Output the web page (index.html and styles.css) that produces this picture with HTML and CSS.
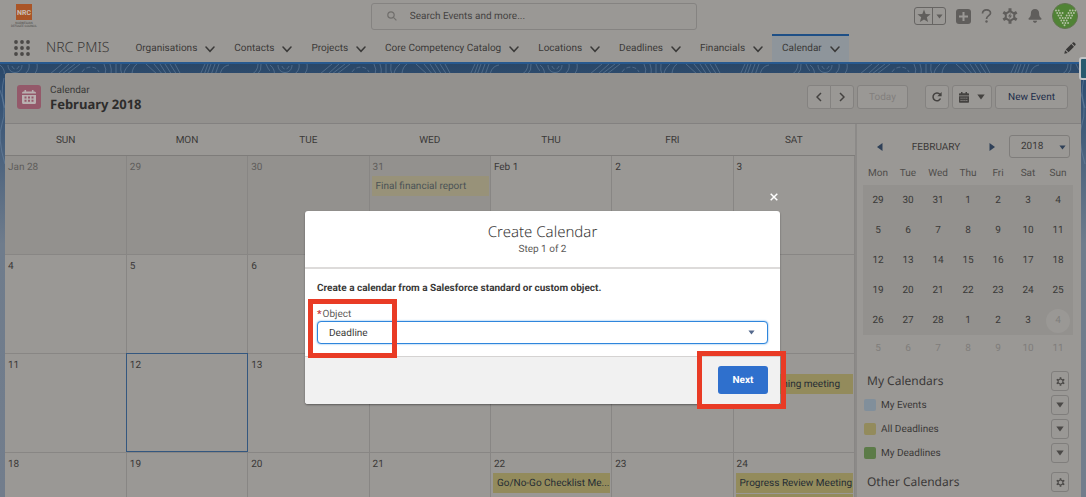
FILE: index.html
```html
<!DOCTYPE html>
<html lang="en">
<head>
<meta charset="utf-8">
<title>Calendar | NRC PMIS</title>
<link rel="stylesheet" href="styles.css">
</head>
<body>
<svg class="sprite" aria-hidden="true">
  <symbol id="chev" viewBox="0 0 10 7"><path d="M1 1l4 4.3L9 1" fill="none" stroke="currentColor" stroke-width="1.5" stroke-linecap="round"/></symbol>
  <symbol id="down" viewBox="0 0 8 6"><path d="M.3.5h7.4L4 5.5z" fill="currentColor"/></symbol>
  <symbol id="gear" viewBox="0 0 16 16"><path fill="none" stroke="currentColor" stroke-width="2" d="M8 3.2l4.2 2.4v4.8L8 12.8l-4.2-2.4V5.6z"/><path stroke="currentColor" stroke-width="3" d="M8 .3v3M8 12.7v3M1.3 4.2l2.6 1.5M12.1 10.3l2.6 1.5M14.7 4.2l-2.6 1.5M3.9 10.3l-2.6 1.5"/></symbol>
</svg>

<header class="topbar">
  <div class="logo">
    <svg class="logo-mark" viewBox="0 0 16 16" aria-hidden="true"><path fill="#aa5527" d="M0 0h16v16H0z"/></svg>
    <span class="logo-name">NRC</span>
    <span class="logo-sub">NORWEGIAN<br>REFUGEE COUNCIL</span>
  </div>
  <label class="search">
    <svg viewBox="0 0 10 10" aria-hidden="true"><circle cx="4" cy="4" r="3.2"/><path d="M6.4 6.4l3 3"/></svg>
    <input type="text" placeholder="Search Events and more..." aria-label="Search Events and more">
  </label>
  <div class="tools">
    <div class="fav">
      <button aria-label="Favorite"><svg width="14" height="14" viewBox="0 0 14 14"><path fill="currentColor" d="M7 .6l1.7 4.5 4.9.2-3.8 3 1.3 4.8L7 10.4l-4.1 2.7 1.3-4.8-3.8-3 4.9-.2z"/></svg></button>
      <button aria-label="Favorites list"><svg width="7" height="5"><use href="#down"/></svg></button>
    </div>
    <button aria-label="Add"><svg width="15" height="15" viewBox="0 0 15 15"><rect width="15" height="15" rx="3" fill="currentColor"/><path d="M7.5 3v9M3 7.5h9" stroke="#9a9895" stroke-width="2"/></svg></button>
    <button aria-label="Help"><svg width="11" height="14" viewBox="0 0 11 14"><path d="M1.5 4.5C1.4-.4 9.6-.3 9.5 4.2 9.4 6.700 5.500 6.800 5.500 10" fill="none" stroke="currentColor" stroke-width="1.700"/><circle cx="5.500" cy="12.500" r="1.200" fill="currentColor"/></svg></button>
    <button aria-label="Setup"><svg width="16" height="16" viewBox="0 0 16 16"><use href="#gear"/><path d="M8.800 4.800L6 8.500h1.700l-.5 2.700L10 7.500H8.300z" fill="currentColor"/></svg></button>
    <button aria-label="Notifications"><svg width="14" height="14" viewBox="0 0 14 14"><path fill="currentColor" d="M7 0c2.600 0 4.100 1.900 4.100 4.300 0 3 .7 3.600 2 4.800.9.8.3 1.600-.5 1.600H1.400C.6 10.700 0 9.900.9 9.100c1.300-1.200 2-1.800 2-4.800C2.900 1.900 4.400 0 7 0zM5 11.700h4c-.1 2.800-3.900 2.800-4 0z"/></svg></button>
    <button aria-label="Profile"><svg width="26" height="26" viewBox="0 0 26 26"><circle cx="13" cy="13" r="12.500" fill="#508335" stroke="#61744f"/><g fill="none" stroke="#b4c1a5" stroke-width="1.900" stroke-linecap="round"><path stroke-dasharray="0 2.700" d="M4 7.500h3M18 7.500h6M5.200 10h6M16.500 10h6M6.500 12.500h4M14.700 12.500h6M8 15h11M9.300 17.500h8M10.700 20h6M12.500 22.300h1"/></g></svg></button>
  </div>
</header>

<nav class="nav">
  <button class="launcher" aria-label="App launcher"><svg width="16" height="16" viewBox="0 0 16 16" fill="currentColor"><circle cx="2" cy="2" r="1.900"/><circle cx="8" cy="2" r="1.900"/><circle cx="14" cy="2" r="1.900"/><circle cx="2" cy="8" r="1.900"/><circle cx="8" cy="8" r="1.900"/><circle cx="14" cy="8" r="1.900"/><circle cx="2" cy="14" r="1.900"/><circle cx="8" cy="14" r="1.900"/><circle cx="14" cy="14" r="1.900"/></svg></button>
  <span class="app">NRC PMIS</span>
  <a class="tab" href="#">Organisations<svg><use href="#chev"/></svg></a>
  <a class="tab" href="#">Contacts<svg><use href="#chev"/></svg></a>
  <a class="tab" href="#">Projects<svg><use href="#chev"/></svg></a>
  <a class="tab" href="#">Core Competency Catalog<svg><use href="#chev"/></svg></a>
  <a class="tab" href="#">Locations<svg><use href="#chev"/></svg></a>
  <a class="tab" href="#">Deadlines<svg><use href="#chev"/></svg></a>
  <a class="tab" href="#">Financials<svg><use href="#chev"/></svg></a>
  <a class="tab active" href="#">Calendar<svg><use href="#chev"/></svg></a>
  <button class="edit" aria-label="Edit navigation"><svg width="12" height="12" viewBox="0 0 12 12" fill="currentColor"><path d="M.3 11.700l.8-3.400 2.600 2.600zM1.800 7.500l5.500-5.500 2.700 2.700-5.500 5.500zM8 1.300l.9-.9c.9-.9 3.500 1.700 2.600 2.600l-.9.900z"/></svg></button>
</nav>

<div class="stage">
  <svg class="topo" aria-hidden="true">
    <defs><pattern id="waves" width="270" height="130" patternUnits="userSpaceOnUse">
      <g fill="none" stroke="#6f8aa5" stroke-opacity=".5">
        <path d="M0 1c4 3 5 8 4 9M8 1c0 10 14 10 14 0M29 0c1 5-2 9-6 11M37 0c1 5-1 9-4 11M50 10L62 0M58 10L69 0M62 10L75 0M67 10L80 0M104 0q3 5 1 11M110 0q2 5 1 11M116 0v11M121 0q-1 6 1 11M130 0c-3 3-6 6-6 11M137 0c-4 3-5 7-5 11M146 0l12 11M154 0l9 11M160 0l7 11M165 0l7 11M170 0l7 11M175 0l6 11M200 11l5-11M204 11l4-11M207 11l4-11M211 11l4-11M215 11l4-11M220 11c1-6 4-9 9-10M251 11q7-4 7-11M257 11q5-5 4-11M266 0q2 5 4 7"/>
        <path d="M82 8c3-6 14-7 17 0M12 2c1 4 6 4 7 0" stroke-dasharray="4 2"/>
        <path d="M0 26q7 20 2 34t3 40M265 30q-8 16 0 26M269 40q-7 8 1 16M4 14q-4 16 1 30"/>
      </g>
    </pattern></defs>
    <rect width="100%" height="130" fill="url(#waves)"/>
  </svg>

  <main class="card">
    <div class="card-head">
      <svg class="cal-icon" viewBox="0 0 24 24" aria-hidden="true"><rect width="24" height="24" rx="3" fill="#94596a"/><g fill="#b9b0b0"><path d="M5 8.500V8q0-1.500 1.500-1.500h11Q19 6.500 19 8v.5zM5 10h14v7.500q0 1.500-1.500 1.500h-11Q5 19 5 17.500z"/><path d="M7.500 5h1.600v3H7.500zM14.900 5h1.600v3h-1.600z"/></g><path d="M7.500 12.500h9M7.500 15.800h9" stroke="#94596a" stroke-width="2" stroke-dasharray="2 1.500"/></svg>
      <div class="titles"><span>Calendar</span><h1>February 2018</h1></div>
      <div class="actions">
        <div class="pair">
          <button class="btn" aria-label="Previous"><svg width="6" height="10" viewBox="0 0 6 10"><path d="M5 1L1 5l4 4" class="line"/></svg></button>
          <button class="btn" aria-label="Next month"><svg width="6" height="10" viewBox="0 0 6 10"><path d="M1 1l4 4-4 4" class="line"/></svg></button>
        </div>
        <button class="btn today" disabled>Today</button>
        <button class="btn refresh" aria-label="Refresh"><svg width="10" height="10" viewBox="0 0 10 10"><path d="M8.500 6.500A3.900 3.900 0 1 1 8 2.500" class="line"/><path d="M9.600 0v4.300H5.400z" fill="currentColor"/></svg></button>
        <button class="btn view" aria-label="View"><svg width="10" height="11" viewBox="0 0 10 11"><path d="M0 3.500V2q0-.8.8-.8h8.400q.8 0 .8.8v1.500zM0 4.300h10v5.700q0 .8-.8.8H.8Q0 10.800 0 10zM2 0h1.500v2H2zM6.500 0H8v2H6.500z" fill="currentColor"/><path d="M1.500 6.200h7M1.500 8.500h7" stroke="#9a9895" stroke-width=".8" stroke-dasharray="1.200 .7"/></svg><svg width="8" height="6"><use href="#down"/></svg></button>
        <button class="btn new">New Event</button>
      </div>
    </div>

    <div class="card-body">
      <table class="month">
        <thead><tr><th>SUN</th><th>MON</th><th>TUE</th><th>WED</th><th>THU</th><th>FRI</th><th>SAT</th></tr></thead>
        <tbody>
          <tr><td class="past">Jan 28</td><td class="past">29</td><td class="past">30</td><td class="past">31<div class="event faded">Final financial report</div></td><td>Feb 1</td><td>2</td><td>3</td></tr>
          <tr><td>4</td><td>5</td><td>6</td><td>7</td><td>8</td><td>9</td><td>10</td></tr>
          <tr><td>11</td><td class="now">12</td><td>13</td><td>14</td><td>15</td><td>16</td><td>17<div class="event tail">ning meeting</div></td></tr>
          <tr><td>18</td><td>19</td><td>20</td><td>21</td><td>22<div class="event">Go/No-Go Checklist Me...</div></td><td>23</td><td>24<div class="event">Progress Review Meeting</div><div class="event"></div></td></tr>
        </tbody>
      </table>

      <aside class="side">
        <div class="picker">
          <button aria-label="Previous month"><svg width="6" height="8" viewBox="0 0 6 8"><path d="M5.500 0v8L0 4z" fill="currentColor"/></svg></button>
          <span>FEBRUARY</span>
          <button aria-label="Next month"><svg width="6" height="8" viewBox="0 0 6 8"><path d="M.5 0v8L6 4z" fill="currentColor"/></svg></button>
          <div class="year"><select aria-label="Year"><option>2018</option></select><svg width="7" height="5"><use href="#down"/></svg></div>
        </div>
        <table class="mini">
          <thead><tr><th>Mon</th><th>Tue</th><th>Wed</th><th>Thu</th><th>Fri</th><th>Sat</th><th>Sun</th></tr></thead>
          <tbody>
            <tr><td>29</td><td>30</td><td>31</td><td>1</td><td>2</td><td>3</td><td>4</td></tr>
            <tr><td>5</td><td>6</td><td>7</td><td>8</td><td>9</td><td>10</td><td>11</td></tr>
            <tr><td>12</td><td>13</td><td>14</td><td>15</td><td>16</td><td>17</td><td>18</td></tr>
            <tr><td>19</td><td>20</td><td>21</td><td>22</td><td>23</td><td>24</td><td>25</td></tr>
            <tr><td>26</td><td>27</td><td>28</td><td>1</td><td>2</td><td>3</td><td><span class="dot">4</span></td></tr>
          </tbody>
          <tfoot><tr><td>5</td><td>6</td><td>7</td><td>8</td><td>9</td><td>10</td><td>11</td></tr></tfoot>
        </table>
        <div class="group"><h2>My Calendars</h2><button class="sq" aria-label="My Calendars settings"><svg width="9" height="9"><use href="#gear"/></svg></button></div>
        <div class="cal"><i class="swatch blue"></i><span>My Events</span><button class="sq" aria-label="My Events menu"><svg width="8" height="6"><use href="#down"/></svg></button></div>
        <div class="cal"><i class="swatch yellow"></i><span>All Deadlines</span><button class="sq" aria-label="All Deadlines menu"><svg width="8" height="6"><use href="#down"/></svg></button></div>
        <div class="cal"><i class="swatch green"></i><span>My Deadlines</span><button class="sq" aria-label="My Deadlines menu"><svg width="8" height="6"><use href="#down"/></svg></button></div>
        <div class="group other"><h2>Other Calendars</h2><button class="sq" aria-label="Other Calendars settings"><svg width="9" height="9"><use href="#gear"/></svg></button></div>
      </aside>
    </div>
  </main>
</div>

<div class="handle"></div>

<div class="overlay">
  <section class="modal" role="dialog" aria-labelledby="dlg-title">
    <button class="close" aria-label="Close"><svg width="8" height="8" viewBox="0 0 8 8"><path d="M.7.700l6.600 6.600M7.300.7L.7 7.300" stroke="#fff" stroke-width="1.500"/></svg></button>
    <header class="modal-head"><h2 id="dlg-title">Create Calendar</h2><p>Step 1 of 2</p></header>
    <div class="modal-body">
      <p class="lead">Create a calendar from a Salesforce standard or custom object.</p>
      <label for="object"><b>*</b>Object</label>
      <div class="pick"><select id="object"><option>Deadline</option></select><svg width="7" height="5"><use href="#down"/></svg></div>
    </div>
    <footer class="modal-foot"><button class="next">Next</button></footer>
    <div class="mark mark-field"></div>
    <div class="mark mark-next"></div>
  </section>
</div>
</body>
</html>
```
FILE: styles.css
```css
* { box-sizing: border-box; }
body {
  margin: 0;
  height: 100vh;
  overflow: hidden;
  display: flex;
  flex-direction: column;
  position: relative;
  background: #9a9895;
  color: #3a3938;
  font: 10px/16px Roboto, "Noto Sans", sans-serif;
  text-rendering: geometricPrecision;
}
button, input, select { font: inherit; color: inherit; margin: 0; text-rendering: inherit; }
button { display: inline-flex; align-items: center; justify-content: center; padding: 0; border: 0; background: none; }
svg { display: block; }
h1, h2, p { margin: 0; font-weight: 400; }
h1, h2, .app { font-family: "Noto Sans", sans-serif; }
table { border-collapse: collapse; table-layout: fixed; }
a { color: inherit; text-decoration: none; }
.sprite { position: absolute; width: 0; height: 0; }
.line { fill: none; stroke: currentColor; stroke-width: 1.5; }

/* Top bar */
.topbar { flex: none; height: 34px; display: grid; grid-template-columns: 20fr 18fr 21fr; align-items: center; padding: 0 8px 2px; }
.logo { position: relative; width: 32px; display: flex; flex-direction: column; align-items: center; color: #4b4947; }
.logo-mark { width: 16px; height: 16px; }
.logo-name { position: absolute; top: 2px; color: #c9bfb8; font-size: 7px; line-height: 14px; font-weight: 700; }
.logo-sub { margin-top: 2px; font-size: 3px; line-height: 3px; text-align: center; white-space: nowrap; }
.search { display: flex; align-items: center; gap: 13px; height: 27px; padding-left: 15px; border: 1px solid #858381; border-radius: 3px; }
.search svg { width: 10px; height: 10px; fill: none; stroke: #706e6c; stroke-width: 1.2; }
.search input { flex: 1; min-width: 0; padding: 2px 0 0; border: 0; outline: 0; background: none; }
.search input::placeholder { color: #454342; opacity: 1; }
.tools { display: flex; justify-content: flex-end; align-items: center; gap: 10px; color: #605e5c; }
.fav { display: flex; height: 18px; border: 1px solid #676563; border-radius: 3px; }
.fav button { width: 17px; }
.fav button + button { width: 13px; border-left: 1px solid #676563; }

/* Navigation */
.nav { flex: none; height: 28px; display: flex; align-items: stretch; padding: 0 10px 0 14px; }
.launcher { width: 16px; color: #4b4947; }
.app { margin: 0 16px; font-size: 14px; line-height: 28px; font-weight: 300; white-space: nowrap; }
.tab { display: flex; align-items: center; gap: 8px; padding: 2px 9px 0 10px; white-space: nowrap; }
.tab svg { width: 10px; height: 7px; }
.tab.active { background: #8e959b; border-top: 2px solid #1e4f86; padding-top: 0; }
.edit { margin-left: auto; width: 12px; }

/* Page ground */
.stage { flex: 1; min-height: 0; position: relative; padding: 9px 5px 0; border-top: 2px solid #27598f; background: linear-gradient(#2a4767 0, #2f4e72 20px, #6f7c8c 180px, #727d8c 100%); }
.topo { position: absolute; inset: 0; width: 100%; height: 130px; }
.card { position: relative; background: #9a9895; border-radius: 3px 3px 0 0; overflow: hidden; height: 100%; }
.card-head { height: 51px; display: flex; align-items: center; padding: 0 13px 2px 12px; background: #93918e; border-bottom: 1px solid #838180; }
.cal-icon { width: 24px; height: 24px; }
.titles { margin-left: 9px; padding-top: 1px; line-height: 13px; }
.titles h1 { font-size: 13px; line-height: 14px; font-weight: 700; color: #2e2d2c; }
.actions { margin-left: auto; display: flex; gap: 3px; }
.pair { display: flex; }
.pair .btn { width: 24px; }
.pair .btn:first-child { border-radius: 3px 0 0 3px; }
.pair .btn + .btn { margin-left: -1px; border-radius: 0 3px 3px 0; }
.btn { height: 24px; border: 1px solid #848280; border-radius: 3px; background: #9a9895; color: #444240; }
.today, .new { padding-top: 2px; }
.today { width: 51px; color: #827f7d; margin-right: 14px; }
.refresh { width: 24px; }
.view { width: 40px; gap: 8px; }
.new { width: 73px; color: #1c2c4a; }

/* Month */
.card-body { display: flex; }
.month { flex: 1; min-width: 0; width: 0; }
.month th { height: 31px; padding: 3px 0 0; font-weight: 400; border-bottom: 1px solid #7e7c7a; }
.month td { height: 99px; padding: 4px 2px 0 3px; vertical-align: top; border: 1px solid #888684; border-width: 1px 1px 0 0; overflow: hidden; }
.month .past { background: #93918e; color: #5f5d5b; }
.month .now { outline: 1px solid #34577f; outline-offset: -1px; }
.event { height: 20px; margin: 0 -1px 1px; padding: 1px 4px 0; background: #938b5c; color: #262d35; line-height: 20px; white-space: nowrap; overflow: hidden; }
.event.faded { background: #989279; color: #4b5356; }
.event.tail { text-align: right; padding-right: 13px; }

/* Sidebar */
.side { flex: none; width: 226px; padding: 11px 8px 0 6px; border-left: 2px solid #8c8a88; }
.picker { display: flex; align-items: center; padding: 0 3px 0 14px; color: #2f4058; }
.picker span { flex: 1; padding-top: 2px; text-align: center; color: #3a3938; }
.year { position: relative; width: 61px; margin-left: 14px; }
.year svg { position: absolute; right: 4px; top: 10px; }
.year select { appearance: none; width: 100%; height: 23px; padding: 1px 11px 0; border: 1px solid #7f7d7b; border-radius: 3px; background: none; color: #3a3938; }
.mini { width: 210px; margin-top: 2px; text-align: center; }
.mini th { height: 25px; padding: 2px 0 0; font-weight: 400; color: #4f4d4b; }
.mini tbody { background: #93918e; }
.mini td { height: 30px; padding: 2px 0 0; }
.mini tfoot td { color: #7f7d7b; height: 26px; }
.dot { display: block; width: 24px; height: 24px; margin: auto; border-radius: 50%; background: #9a9895; color: #807e7c; line-height: 24px; }
.group { display: flex; align-items: center; justify-content: space-between; padding: 0 4px; margin-top: 10px; }
.group h2 { font-size: 12px; line-height: 20px; }
.group.other { margin-top: 9px; }
.sq { width: 18px; height: 20px; border: 1px solid #807e7c; border-radius: 3px; color: #4b4947; }
.cal { display: flex; align-items: center; margin-top: 4px; padding: 0 4px 0 1px; }
.cal span { flex: 1; margin-left: 5px; padding-top: 2px; }
.swatch { width: 12px; height: 12px; border-radius: 2px; }
.blue { background: #818f9b; }
.yellow { background: #938b5c; }
.green { background: #5c7b48; }

.handle { position: absolute; right: -5px; top: 57px; width: 12px; height: 23px; border: 2px solid #c3c5c7; border-radius: 3px; background: #285a6e; }

/* Dialog */
.overlay { position: absolute; inset: 0; display: flex; justify-content: center; align-items: flex-start; padding: 211px 17px 0 16px; }
.modal { position: relative; width: 475px; max-width: 100%; border-radius: 3px; background: #fff; box-shadow: 0 1px 2px rgba(0, 0, 0, .4); }
.close { position: absolute; right: 2px; top: -18px; }
.modal-head { height: 58px; padding-top: 10px; text-align: center; border-bottom: 2px solid #dddbda; }
.modal-head h2 { font-size: 15px; line-height: 22px; font-weight: 300; color: #3a3938; }
.modal-head p { line-height: 14px; color: #5c5a58; }
.modal-body { padding: 12px; }
.lead { font-weight: 700; line-height: 16px; margin-bottom: 12px; }
.modal-body label { display: block; line-height: 12px; color: #5c5a58; }
.modal-body label b { color: #c23934; margin-right: 1px; }
.pick { position: relative; }
.pick svg { position: absolute; right: 13px; top: 9px; color: #54698d; }
.pick select { appearance: none; display: block; width: 100%; height: 23px; padding: 2px 11px 0; border: 1px solid #2f86dc; border-radius: 4px; background: #fff; box-shadow: 0 0 2px #5ea5e8; }
.modal-foot { display: flex; justify-content: flex-end; padding: 9px 12px 10px; background: #f1f1f1; border-top: 1px solid #d5d3d2; border-radius: 0 0 3px 3px; }
.next { width: 50px; height: 28px; padding-top: 2px; border-radius: 3px; background: #2f70cd; color: #fff; font-weight: 700; }
.mark { position: absolute; border: 5px solid #e93b25; pointer-events: none; }
.mark-field { left: 3px; top: 88px; width: 89px; height: 59px; }
.mark-next { right: -6px; bottom: -5px; width: 89px; height: 58px; }
```
